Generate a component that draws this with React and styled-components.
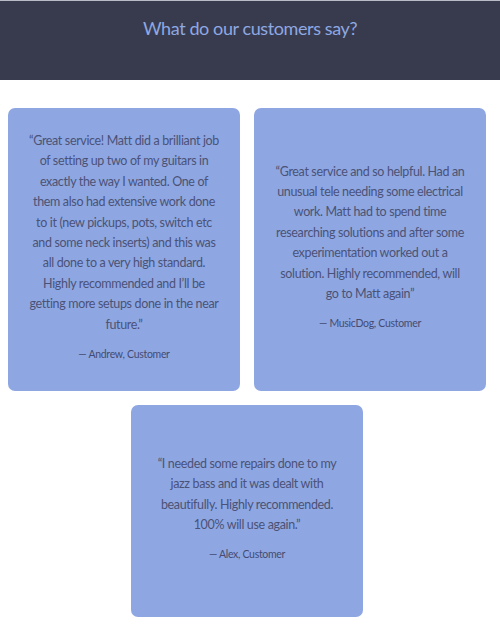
import React from "react";
import styled, { createGlobalStyle } from "styled-components";

const reviews = [
  {
    lines: [
      "\u201cGreat service! Matt did a brilliant job",
      "of setting up two of my guitars in",
      "exactly the way I wanted. One of",
      "them also had extensive work done",
      "to it (new pickups, pots, switch etc",
      "and some neck inserts) and this was",
      "all done to a very high standard.",
      "Highly recommended and I\u2019ll be",
      "getting more setups done in the near",
      "future.\u201d",
    ],
    author: "Andrew, Customer",
  },
  {
    lines: [
      "\u201cGreat service and so helpful. Had an",
      "unusual tele needing some electrical",
      "work. Matt had to spend time",
      "researching solutions and after some",
      "experimentation worked out a",
      "solution. Highly recommended, will",
      "go to Matt again\u201d",
    ],
    author: "MusicDog, Customer",
  },
  {
    lines: [
      "\u201cI needed some repairs done to my",
      "jazz bass and it was dealt with",
      "beautifully. Highly recommended.",
      "100% will use again.\u201d",
    ],
    author: "Alex, Customer",
  },
];

function App() {
  return (
    <>
      <GlobalStyle />
      <Page>
        <Header>
          <Title>What do our customers say?</Title>
        </Header>

        <CardGrid>
          {reviews.map((r, i) => (
            <Card key={r.author} $tall={i < 2}>
              <Quote>
                {r.lines.map((l) => (
                  <Line key={l}>{l}</Line>
                ))}
              </Quote>
              <Author>&mdash; {r.author}</Author>
            </Card>
          ))}
        </CardGrid>
      </Page>
    </>
  );
}

const GlobalStyle = createGlobalStyle`
  html, body {
    margin: 0;
    padding: 0;
    background: #fff;
  }
  body {
    font-family: Lato, "Liberation Sans", sans-serif;
  }
`;

const Page = styled.div`
  width: 500px;
  min-height: 634px;
`;

// header band
const Header = styled.header`
  height: 80px;
  background: #383b4e;
  border-top: 1px solid #b9bcc6;
  box-sizing: border-box;
  display: flex;
  justify-content: center;
  padding-top: 13px;
`;

const Title = styled.h1`
  margin: 0;
  font-size: 18px;
  font-weight: 400;
  letter-spacing: -0.4px;
  color: #8ea8e2;
  line-height: 28px;
`;

// cards
const CardGrid = styled.div`
  width: 478px;
  margin: 28px 0 0 8px;
  display: flex;
  flex-wrap: wrap;
  justify-content: center;
  gap: 14px;
`;

const Card = styled.div`
  width: 232px;
  height: ${(p) => (p.$tall ? "283px" : "212px")};
  box-sizing: border-box;
  padding: 0 10px;
  background: #8ea7e2;
  border-radius: 7px;
  display: flex;
  flex-direction: column;
  justify-content: center;
  align-items: center;
  text-align: center;
`;

const Quote = styled.div`
  font-size: 12.5px;
  line-height: 20.4px;
  letter-spacing: -0.35px;
  color: #4b5277;
`;

const Line = styled.span`
  display: block;
  white-space: nowrap;
`;

const Author = styled.p`
  margin: 13px 0 8px;
  font-size: 10.5px;
  letter-spacing: -0.3px;
  color: #444b72;
`;

export default App;
